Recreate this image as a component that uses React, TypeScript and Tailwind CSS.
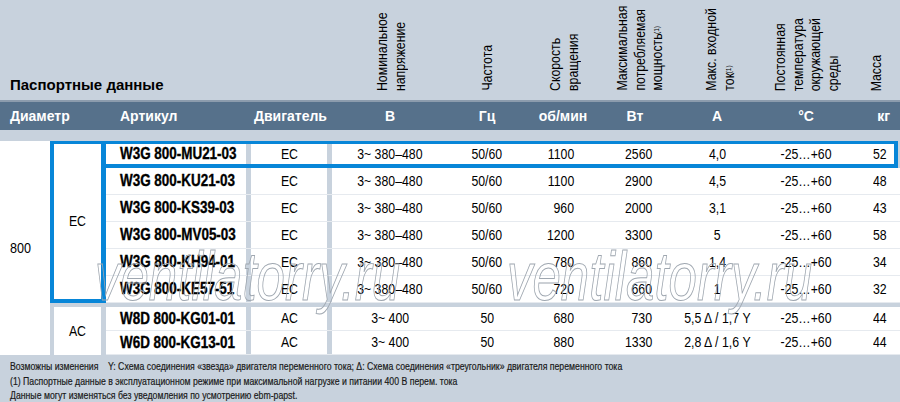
import React from "react";

type R = {
  art: string;
  motor: string;
  v: string;
  hz: string;
  rpm: string;
  w: string;
  a: string;
  c: string;
  kg: string;
};

const ec: R[] = [
  { art: "W3G 800-MU21-03", motor: "EC", v: "3~ 380–480", hz: "50/60", rpm: "1100", w: "2560", a: "4,0", c: "-25…+60", kg: "52" },
  { art: "W3G 800-KU21-03", motor: "EC", v: "3~ 380–480", hz: "50/60", rpm: "1100", w: "2900", a: "4,5", c: "-25…+60", kg: "48" },
  { art: "W3G 800-KS39-03", motor: "EC", v: "3~ 380–480", hz: "50/60", rpm: "960", w: "2000", a: "3,1", c: "-25…+60", kg: "43" },
  { art: "W3G 800-MV05-03", motor: "EC", v: "3~ 380–480", hz: "50/60", rpm: "1200", w: "3300", a: "5", c: "-25…+60", kg: "58" },
  { art: "W3G 800-KH94-01", motor: "EC", v: "3~ 380–480", hz: "50/60", rpm: "780", w: "860", a: "1,4", c: "-25…+60", kg: "34" },
  { art: "W3G 800-KE57-51", motor: "EC", v: "3~ 380–480", hz: "50/60", rpm: "720", w: "660", a: "1", c: "-25…+60", kg: "32" },
];

const ac: R[] = [
  { art: "W8D 800-KG01-01", motor: "AC", v: "3~ 400", hz: "50", rpm: "680", w: "730", a: "5,5 Δ / 1,7 Y", c: "-25…+60", kg: "44" },
  { art: "W6D 800-KG13-01", motor: "AC", v: "3~ 400", hz: "50", rpm: "880", w: "1330", a: "2,8 Δ / 1,6 Y", c: "-25…+60", kg: "44" },
];

function C({ children }: { children: React.ReactNode }) {
  return <span className="inline-block whitespace-nowrap scale-x-[0.82] origin-center">{children}</span>;
}
function L({ children }: { children: React.ReactNode }) {
  return <span className="inline-block whitespace-nowrap scale-x-[0.84] origin-left">{children}</span>;
}
function Rt({ children }: { children: React.ReactNode }) {
  return <span className="inline-block whitespace-nowrap scale-x-[0.82] origin-right">{children}</span>;
}

function Row({ r, hl, h }: { r: R; hl?: boolean; h: string }) {
  const base = hl
    ? "border-t-[3px] border-b-4 border-r-4 border-[#0786d8] mr-[2px]"
    : "border-b border-[#e6eaef]";
  return (
    <div className={`flex ${h} items-stretch bg-white text-black text-[15px] ${base}`}>
      <div className="w-[140px] pl-[14px] flex items-center font-bold text-[16px] [-webkit-text-stroke:0.35px_black]">
        <L>{r.art}</L>
      </div>
      <div className="w-[5px] bg-[#c8d2dd]" />
      <div className="w-[76px] flex items-center justify-center">
        <C>{r.motor}</C>
      </div>
      <div className="w-[5px] bg-[#c8d2dd]" />
      <div className="w-[116px] flex items-center justify-center">
        <C>{r.v}</C>
      </div>
      <div className="w-[78px] flex items-center justify-center">
        <C>{r.hz}</C>
      </div>
      <div className="w-[74px] flex items-center justify-end pr-[26px]">
        <Rt>{r.rpm}</Rt>
      </div>
      <div className="w-[78px] flex items-center justify-end pr-[26px]">
        <Rt>{r.w}</Rt>
      </div>
      <div className="w-[82px] flex items-center justify-center pr-[3px]">
        <C>{r.a}</C>
      </div>
      <div className="w-[92px] flex items-center justify-center">
        <C>{r.c}</C>
      </div>
      <div className={`flex-1 flex items-center justify-end ${hl ? "pr-[7px]" : "pr-[13px]"}`}>
        <Rt>{r.kg}</Rt>
      </div>
    </div>
  );
}

function VLabel({ lines, w }: { lines: React.ReactNode[]; w: string }) {
  return (
    <div className={`${w} flex justify-center items-end`}>
      <div className="scale-y-[0.82] origin-bottom">
        <div className="[writing-mode:vertical-rl] rotate-180 text-[15px] leading-[17.5px] text-black whitespace-nowrap">
          {lines.map((l, i) => (
            <div key={i}>{l}</div>
          ))}
        </div>
      </div>
    </div>
  );
}

const Sup = () => <sup className="text-[8px] relative -top-[1px]">(1)</sup>;

const WM =
  "absolute top-[101px] text-[68px] leading-none italic text-transparent [-webkit-text-stroke:1px_#9fa7b0] pointer-events-none whitespace-nowrap scale-x-[0.75] origin-left";

export default function App() {
  return (
    <div className="w-[900px] h-[402px] overflow-hidden bg-[#c8d2dd] font-['Liberation_Sans',Arial,sans-serif]">
      {/* top header */}
      <div className="flex h-[100px] pb-[9px]">
        <div className="w-[332px] flex items-end pl-[10px]">
          <span className="font-bold text-[15px] leading-[17px] text-black relative top-[2px]">Паспортные данные</span>
        </div>
        <VLabel w="w-[116px]" lines={["Номинальное", "напряжение"]} />
        <VLabel w="w-[78px]" lines={["Частота"]} />
        <VLabel w="w-[74px]" lines={["Скорость", "вращения"]} />
        <VLabel w="w-[78px]" lines={["Максимальная", "потребляемая", <>мощность<Sup /></>]} />
        <VLabel w="w-[82px]" lines={["Макс. входной", <>ток<Sup /></>]} />
        <VLabel w="w-[92px]" lines={["Постоянная", "температура", "окружающей", "среды"]} />
        <VLabel w="flex-1" lines={["Масса"]} />
      </div>
      <div className="h-[2px] bg-[#8c9cad]" />
      {/* header bar */}
      <div className="flex h-[28px] items-center bg-[#56718b] text-white font-bold text-[14px]">
        <div className="w-[106px] pl-[10px]">Диаметр</div>
        <div className="w-[140px] pl-[14px]">Артикул</div>
        <div className="w-[5px]" />
        <div className="w-[76px] pl-[3px]">Двигатель</div>
        <div className="w-[5px]" />
        <div className="w-[116px] text-center">В</div>
        <div className="w-[78px] text-center">Гц</div>
        <div className="w-[74px] text-center">об/мин</div>
        <div className="w-[78px] text-center pr-[8px]">Вт</div>
        <div className="w-[82px] text-center pr-[4px]">A</div>
        <div className="w-[92px] text-center">°C</div>
        <div className="flex-1 text-right pr-[10px]">кг</div>
      </div>
      <div className="h-[11px]" />
      {/* body */}
      <div className="relative flex">
        <div className="w-[50px] bg-white flex items-center pl-[10px] text-[15px] text-black">
          <L>800</L>
        </div>
        <div className="flex-1 flex flex-col">
          <div className="flex">
            <div className="w-[56px] bg-white border-l-4 border-t-[3px] border-b-4 border-r-[5px] border-[#0786d8] flex items-center justify-center text-[15px] text-black">
              <C>EC</C>
            </div>
            <div className="flex-1 flex flex-col">
              {ec.map((r, i) => (
                <Row key={r.art} r={r} hl={i === 0} h="h-[27px]" />
              ))}
            </div>
          </div>
          <div className="h-[4px]" />
          <div className="flex">
            <div className="w-[56px] bg-white border-l-4 border-r-[5px] border-[#c8d2dd] flex items-center justify-center text-[15px] text-black">
              <C>AC</C>
            </div>
            <div className="flex-1 flex flex-col">
              {ac.map((r) => (
                <Row key={r.art} r={r} h="h-[24px]" />
              ))}
            </div>
          </div>
        </div>
        {/* watermarks */}
        <div className={`${WM} left-[95px]`}>ventilatorry.ru</div>
        <div className={`${WM} left-[507px]`}>ventilatorry.ru</div>
      </div>
      {/* footer */}
      <div className="pt-[4px] pl-[10px]">
        <div className="text-[10.5px] leading-[14.5px] text-[#1a1a1a] [-webkit-text-stroke:0.2px_#1a1a1a] scale-x-[0.83] origin-left w-[1000px]">
          <div className="flex whitespace-nowrap">
            <span className="w-[118px]">Возможны изменения</span>
            <span>Y: Схема соединения «звезда» двигателя переменного тока; Δ: Схема соединения «треугольник» двигателя переменного тока</span>
          </div>
          <div className="whitespace-nowrap">(1) Паспортные данные в эксплуатационном режиме при максимальной нагрузке и питании 400 В перем. тока</div>
          <div className="whitespace-nowrap">Данные могут изменяться без уведомления по усмотрению ebm-papst.</div>
        </div>
      </div>
    </div>
  );
}
